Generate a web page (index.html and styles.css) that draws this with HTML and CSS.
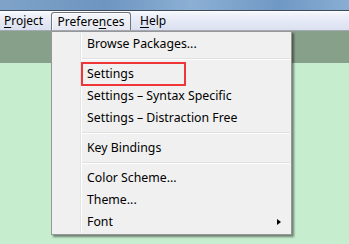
FILE: index.html
```html
<!DOCTYPE html>
<html>
<head>
<meta charset="utf-8">
<link rel="stylesheet" href="styles.css">
</head>
<body>
<div class="window">
  <div class="titlebar"></div>
  <div class="menubar">
    <span class="mb-item mb-project"><u>P</u>roject</span>
    <span class="mb-item mb-active">Prefere<u>n</u>ces</span>
    <span class="mb-item mb-help"><u>H</u>elp</span>
  </div>
  <div class="content">
    <div class="band"></div>
    <div class="area"></div>
  </div>
  <div class="dropdown">
    <div class="gutter"></div>
    <div class="item">Browse Packages...</div>
    <div class="sep"></div>
    <div class="item item-hl">Settings</div>
    <div class="item">Settings – Syntax Specific</div>
    <div class="item">Settings – Distraction Free</div>
    <div class="sep"></div>
    <div class="item">Key Bindings</div>
    <div class="sep"></div>
    <div class="item">Color Scheme...</div>
    <div class="item">Theme...</div>
    <div class="item item-sub">Font<span class="arrow"></span></div>
  </div>
</div>
</body>
</html>
```
FILE: styles.css
```css
html, body {
  margin: 0;
  padding: 0;
}
body {
  width: 349px;
  height: 244px;
  overflow: hidden;
  font-family: "Noto Sans", "Open Sans", sans-serif;
  font-size: 12px;
  color: #000;
}
.window {
  position: relative;
  width: 349px;
  height: 244px;
  display: flex;
  flex-direction: column;
}
.titlebar {
  height: 10px;
  background: linear-gradient(90deg, #7fa3c8 0%, #6d95c0 30%, #8cb0d4 55%, #6f98c4 80%, #88aed3 100%);
  border-bottom: 1px solid #3d4a5a;
}
.menubar {
  height: 19px;
  display: flex;
  align-items: stretch;
  background: linear-gradient(180deg, #ffffff 0%, #f3f5fb 10%, #e6eaf6 50%, #dbe0f0 100%);
  border-bottom: 1px solid #a4a8b4;
}
.mb-item {
  display: flex;
  align-items: center;
  line-height: 1;
}
.mb-item u {
  text-decoration: underline;
  text-underline-offset: 2px;
}
.mb-project {
  padding-left: 4px;
  width: 47px;
}
.mb-active {
  width: 78px;
  margin-top: 1px;
  justify-content: center;
  border: 1px solid #70757c;
  border-bottom: none;
  border-radius: 3px 3px 0 0;
  background: linear-gradient(180deg, #f4f6fa 0%, #e6e9f1 100%);
  box-shadow: inset 1px 1px 0 #fdfdfe;
}
.mb-help {
  padding-left: 9px;
}
.content {
  flex: 1;
  display: flex;
  flex-direction: column;
}
.band {
  height: 32px;
  background: #87a08a;
}
.area {
  flex: 1;
  background: #c7edcf;
}
.dropdown {
  position: absolute;
  left: 51px;
  top: 31px;
  width: 239px;
  padding: 1px 0 1px 0;
  background: #f0f0f0;
  border: 1px solid #979797;
  box-shadow: 2px 2px 2px rgba(0, 0, 0, 0.45);
  font-size: 12.3px;
}
.gutter {
  position: absolute;
  left: 28px;
  top: 1px;
  bottom: 1px;
  width: 1px;
  background: #e2e3e3;
  border-right: 1px solid #ffffff;
}
.item {
  position: relative;
  height: 22px;
  line-height: 22px;
  padding-left: 35px;
  white-space: nowrap;
}
.item-hl::after {
  content: "";
  position: absolute;
  left: 29px;
  top: -1px;
  width: 101px;
  height: 20px;
  border: 2px solid #ee3638;
}
.sep {
  height: 8px;
  margin-left: 30px;
  margin-right: 1px;
  position: relative;
}
.sep::before {
  content: "";
  position: absolute;
  left: 0;
  right: 0;
  top: 3px;
  height: 1px;
  background: #e0e0e0;
  border-bottom: 1px solid #ffffff;
}
.arrow {
  position: absolute;
  left: 225px;
  top: 8px;
  width: 0;
  height: 0;
  border-top: 3.5px solid transparent;
  border-bottom: 3.5px solid transparent;
  border-left: 4px solid #000;
}
```
